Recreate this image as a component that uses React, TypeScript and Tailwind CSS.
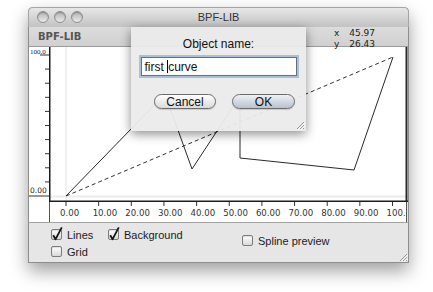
import React from 'react'

const ticksX = Array.from({ length: 11 }, (_, i) => 17 + 32.65 * i)
const ticksY = Array.from({ length: 11 }, (_, i) => 8 + 14.1 * i)
const labelsX = ['0.00', '10.00', '20.00', '30.00', '40.00', '50.00', '60.00', '70.00', '80.00', '90.00', '100.00']

// curve points, local to the plot svg (page - (49, 47))
const curve = '17,149 116,47 143,122 191,49 191,111 305,123 344,10'

function Box({ checked }: { checked?: boolean }) {
  return (
    <span className="relative w-[11px] h-[11px] shrink-0 rounded-[2px] border border-[#7c7c7c] bg-linear-to-b from-white to-[#d9d9d9] shadow-[inset_0_1px_1px_rgba(0,0,0,0.12)]">
      {checked && (
        <svg className="absolute -left-px -top-px overflow-visible" width="11" height="11" viewBox="0 0 11 11">
          <path d="M2.2 6.2 L4.6 10.2 L10.8 -1.6" stroke="#151515" strokeWidth="1.8" fill="none" strokeLinejoin="round" />
        </svg>
      )}
    </span>
  )
}

function Option({ label, checked, className = '' }: { label: string; checked?: boolean; className?: string }) {
  return (
    <div className={`flex items-center gap-[5px] h-[11px] ${className}`}>
      <Box checked={checked} />
      <span className="text-[11px] leading-none text-[#1b1b1b] pt-[2px]">{label}</span>
    </div>
  )
}

function Grip({ className = '' }: { className?: string }) {
  return (
    <svg className={className} width="10" height="10" viewBox="0 0 10 10">
      <path d="M9 2 L2 9 M9 5 L5 9 M9 8 L8 9" stroke="#9a9a9a" strokeWidth="1" />
      <path d="M10 3 L3 10 M10 6 L6 10" stroke="#fafafa" strokeWidth="1" />
    </svg>
  )
}

export default function App() {
  return (
    <div className="w-[433px] h-[292px] bg-white pt-[7px] pl-[28px] font-['Liberation_Sans',Arial,sans-serif] overflow-hidden">
      <div className="w-[381px] h-[256px] flex flex-col rounded-t-[5px] border-x border-b border-[#8d8d8d] shadow-[0_8px_18px_rgba(0,0,0,0.38)]">
        {/* title bar */}
        <div className="relative h-[20px] shrink-0 -mx-px rounded-t-[5px] border-x border-t border-[#a5a5a5] bg-linear-to-b from-[#e7e7e7] to-[#c2c2c2] flex items-center justify-center">
          <div className="absolute left-[8px] top-[3px] flex gap-[5px]">
            {[0, 1, 2].map(i => (
              <span key={i} className="w-[12px] h-[12px] rounded-full border border-[#8e8e8e] bg-linear-to-b from-[#b2b2b2] to-[#ececec] shadow-[inset_0_1px_1px_rgba(0,0,0,0.25)]" />
            ))}
          </div>
          <span className="text-[11px] leading-none text-[#333]">BPF-LIB</span>
        </div>

        {/* main */}
        <div className="relative flex-1 flex flex-col bg-white">
          {/* header */}
          <div className="h-[20px] shrink-0 flex items-start bg-linear-to-b from-[#dcdcdc] to-[#d0d0d0] border-b border-[#9c9c9c] font-['DejaVu_Sans',sans-serif]">
            <span className="self-center pl-[9px] text-[10px] font-bold text-[#555]">BPF-LIB</span>
            <div className="ml-auto mr-[33px] pt-[1px] flex flex-col text-[9px] leading-[11px] text-[#222]">
              <div className="flex gap-[10px]"><span>x</span><span>45.97</span></div>
              <div className="flex gap-[10px]"><span>y</span><span>26.43</span></div>
            </div>
          </div>

          {/* plot */}
          <div className="h-[155px] shrink-0 flex">
            <svg width="20" height="155" viewBox="0 0 20 155" className="shrink-0">
              {ticksY.map((y, i) => (
                <line key={i} x1={i === 0 ? 11 : i === 10 ? 0 : 16} x2="20" y1={y} y2={y} stroke="#333" strokeWidth="1" />
              ))}
              <text x="1" y="6.5" fontSize="7" fill="#222" fontFamily="Liberation Serif, serif">100.0</text>
              <text x="1" y="146" fontSize="7.5" fill="#222" fontFamily="DejaVu Sans, sans-serif">0.00</text>
            </svg>
            <svg width="359" height="155" viewBox="0 0 359 155" className="shrink-0">
              <line x1="17" x2="17" y1="0" y2="155" stroke="#ececec" strokeWidth="1.5" />
              <line x1="0" x2="359" y1="149.5" y2="149.5" stroke="#ececec" strokeWidth="2" />
              <line x1="17" y1="149" x2="344" y2="10" stroke="#333" strokeWidth="1" strokeDasharray="4 3" />
              <polyline points={curve} fill="none" stroke="#2a2a2a" strokeWidth="1" />
              <line x1="0.75" x2="0.75" y1="0" y2="155" stroke="#1c1c1c" strokeWidth="1.5" />
              <line x1="357.5" x2="357.5" y1="0" y2="155" stroke="#2a2a2a" strokeWidth="2" />
              <line x1="0" x2="359" y1="154.5" y2="154.5" stroke="#1c1c1c" strokeWidth="2" />
            </svg>
          </div>

          {/* x axis */}
          <div className="h-[21px] shrink-0 flex border-b border-[#a3a3a3]">
            <div className="w-[20px] shrink-0" />
            <svg width="359" height="20" viewBox="0 0 359 20" className="shrink-0">
              {ticksX.map((x, i) => (
                <line key={i} x1={x} x2={x} y1="0" y2="4" stroke="#333" strokeWidth="1" />
              ))}
              {ticksX.map((x, i) => (
                <text key={i} x={x - 6} y="14" fontSize="8.6" fill="#333" fontFamily="DejaVu Sans, sans-serif">{labelsX[i]}</text>
              ))}
              <rect x="357" y="0" width="2" height="20" fill="#e6e6e6" />
              <line x1="357.5" x2="357.5" y1="0" y2="20" stroke="#555" strokeWidth="1" />
              <line x1="0.5" x2="0.5" y1="0" y2="20" stroke="#555" strokeWidth="1" />
            </svg>
          </div>

          {/* controls */}
          <div className="relative flex-1 flex bg-[#e6e6e6]">
            <div className="w-[213px] shrink-0 pl-[22px] pt-[6px] flex flex-col gap-[6px]">
              <div className="flex">
                <Option label="Lines" checked className="w-[57px]" />
                <Option label="Background" checked />
              </div>
              <Option label="Grid" />
            </div>
            <div className="pt-[12px]">
              <Option label="Spline preview" />
            </div>
            <Grip className="absolute right-0 bottom-0" />
          </div>

          {/* name dialog */}
          <div className="absolute left-[102px] top-0 w-[175px] h-[104px] flex flex-col items-center bg-[#ebebeb]/95 shadow-[0_3px_10px_rgba(0,0,0,0.45)] text-[#111]">
            <span className="pt-[10px] text-[12px] leading-[14px]">Object name:</span>
            <div className="mt-[6px] w-[156px] h-[19px] flex items-center pl-[3px] bg-white border border-[#6e6e6e] shadow-[0_0_0_2px_#a9c0da] text-[12px] leading-none">
              <span className="whitespace-pre">first </span>
              <span className="w-px h-[13px] bg-black" />
              <span>curve</span>
            </div>
            <div className="mt-[18px] w-full flex pl-[23px] gap-[16px]">
              <button className="w-[62px] h-[15px] rounded-full border border-[#6c6c6c] bg-linear-to-b from-white to-[#dadada] shadow-[0_1px_1px_rgba(0,0,0,0.15)] text-[12px] leading-none text-[#111]">Cancel</button>
              <button className="w-[63px] h-[15px] rounded-full border border-[#6c6c6c] bg-linear-to-b from-[#eef1f5] to-[#b9c2cd] shadow-[0_1px_1px_rgba(0,0,0,0.15)] text-[12px] leading-none text-[#111]">OK</button>
            </div>
            <Grip className="absolute right-[1px] bottom-[1px]" />
          </div>
        </div>
      </div>
    </div>
  )
}
